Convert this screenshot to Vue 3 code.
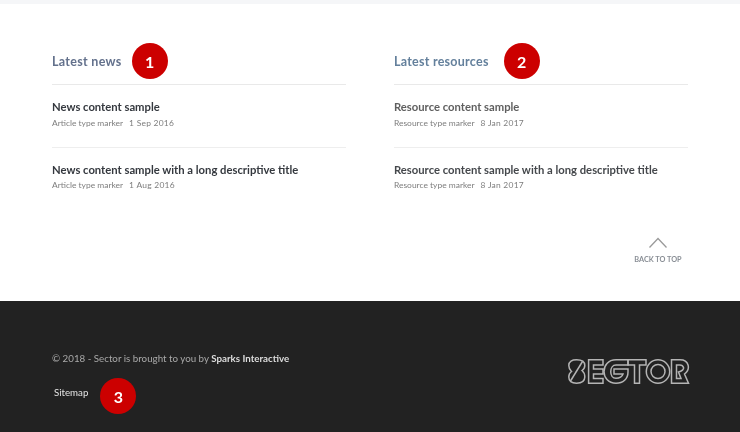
<script setup>
const columns = [
  {
    title: 'Latest news',
    badge: 1,
    items: [
      { title: 'News content sample', type: 'Article type marker', date: '1 Sep 2016' },
      { title: 'News content sample with a long descriptive title', type: 'Article type marker', date: '1 Aug 2016' }
    ]
  },
  {
    title: 'Latest resources',
    badge: 2,
    items: [
      { title: 'Resource content sample', type: 'Resource type marker', date: '8 Jan 2017' },
      { title: 'Resource content sample with a long descriptive title', type: 'Resource type marker', date: '8 Jan 2017' }
    ]
  }
]
</script>

<template>
  <div class="page">
    <div class="topbar"></div>
    <main class="main">
      <div class="columns">
        <section v-for="(col, c) in columns" :key="col.title" class="col" :class="'col' + c">
          <header class="head">
            <h2 class="head-title">{{ col.title }}</h2>
            <span class="badge">{{ col.badge }}</span>
          </header>
          <article v-for="item in col.items" :key="item.title" class="item">
            <h3 class="item-title">{{ item.title }}</h3>
            <p class="meta"><span>{{ item.type }}</span><span class="date">{{ item.date }}</span></p>
          </article>
        </section>
      </div>
      <a class="back">
        <svg width="20" height="12" viewBox="0 0 20 12"><path d="M1.500 10.500 L10 1.500 L18.500 10.500" fill="none" stroke="#9a9a9a" stroke-width="1.300" /></svg>
        <span>BACK TO TOP</span>
      </a>
    </main>
    <footer class="footer">
      <div class="foot-left">
        <p class="copy">© 2018 - Sector is brought to you by <b>Sparks Interactive</b></p>
        <div class="links"><a>Sitemap</a><span class="badge">3</span></div>
      </div>
      <svg class="logo" width="122" height="25" viewBox="0 0 122 25" fill="none" stroke="#b4b4b4" stroke-width="1.500">
        <path d="M8.500 .8 C13 .8 16.800 2.500 16.800 6.500 C16.800 9 15.500 10.500 14 11.500 C15.800 13 16.800 15.500 16.800 18 C16.800 22 13.500 24.200 8.500 24.200 C3.500 24.200 .8 22 .8 18 C.8 15 2 13.500 3.500 12.500 C1.800 11 .8 9 .8 6.500 C.8 2.500 4 .8 8.500 .8 Z" />
        <path d="M14.500 2.500 L2.500 22" />
        <path d="M20.600 .8 H35 V6 H25.500 V10 H35 V15 H25.500 V19.500 H35 V24.200 H20.600 Z" />
        <path d="M48 .8 H60 V6 H48 C41 6 41 19.300 48 19.300 C52 19.300 54 18 55 15 H46 V10 H60 V13 C60 20 55 24.200 48 24.200 C32 24.200 32 .8 48 .8 Z" />
        <path d="M60 .8 H78 V6 H71.500 V24.200 H66.500 V6 H60 Z" />
        <circle cx="90" cy="12.500" r="11.700" />
        <circle cx="90" cy="12.500" r="7" />
        <path d="M103.500 .8 H112 C121 .8 123 10 116.500 15 L120.500 24.200 H103.500 Z M108.500 6 V19.500 H113 L110.500 13 C114 12.500 116 10 115.500 8.500 C115 7 114 6 112 6 Z" />
      </svg>
    </footer>
  </div>
</template>

<style scoped>
.page { width: 740px; height: 432px; overflow: hidden; display: flex; flex-direction: column; font-family: "Lato", "Open Sans", sans-serif; background: #fff; filter: blur(0.35px); }
.topbar { height: 4px; background: #f5f6f8; }
.main { height: 297px; padding: 0 52px; box-sizing: border-box; display: flex; flex-direction: column; }
.columns { display: flex; gap: 48px; padding-top: 40px; }
.col { width: 294px; }
.head { display: flex; align-items: center; border-bottom: 1px solid #e9e9e9; padding-bottom: 6px; height: 34px; }
.head-title { margin: 0; font-size: 12.500px; font-weight: 700; letter-spacing: 0.3px; color: #63718c; }
.col1 .head-title { color: #64809c; letter-spacing: 0.25px; }
.col0 .badge { margin-left: 10px; }
.col1 .badge { margin-left: 15px; }
.badge { width: 36px; height: 36px; border-radius: 50%; background: #cc0000; color: #fff; font-size: 16px; font-weight: 700; display: flex; align-items: center; justify-content: center; flex: none; }
.item { height: 63px; box-sizing: border-box; padding-top: 14px; border-bottom: 1px solid #eeeeee; }
.item:last-child { border-bottom: 0; }
.item-title { margin: 0; font-size: 11.250px; line-height: 16px; font-weight: 700; color: #35393f; }
.col1 .item-title { color: #45484c; }
.col1 .item:first-of-type .item-title { color: #5f5f5f; }
.meta { margin: 1px 0 0; font-size: 8.450px; line-height: 14px; color: #7d7d7d; display: flex; gap: 6px; }
.date { letter-spacing: 0.25px; }
.item:last-child .meta { margin-top: 0; }
.back { align-self: flex-end; margin-top: 26px; width: 50px; margin-right: 5px; display: flex; flex-direction: column; align-items: center; gap: 6px; color: #8a8f96; font-size: 7.300px; font-weight: 700; white-space: nowrap; }
.footer { flex: 1; background: #222; padding: 50px 50px 0 52px; display: flex; justify-content: space-between; align-items: flex-start; }
.copy { margin: 0; font-size: 9.750px; line-height: 14px; color: #a9a9a9; }
.copy b { color: #dcdcdc; font-weight: 700; }
.links { display: flex; align-items: center; margin-top: 13px; height: 36px; padding-left: 2px; color: #e4e4e4; font-size: 9.700px; }
.links a { padding-bottom: 8px; }
.links .badge { margin-left: 12px; }
.logo { margin-top: 8px; }
</style>
